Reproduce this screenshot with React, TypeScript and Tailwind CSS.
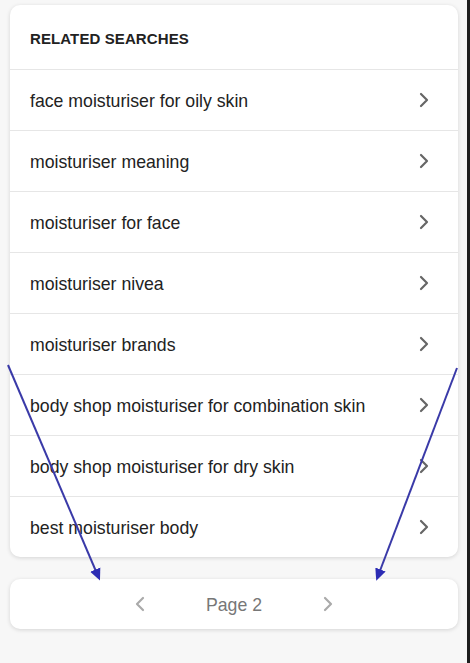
import React from 'react';

const searches = [
  'face moisturiser for oily skin',
  'moisturiser meaning',
  'moisturiser for face',
  'moisturiser nivea',
  'moisturiser brands',
  'body shop moisturiser for combination skin',
  'body shop moisturiser for dry skin',
  'best moisturiser body',
];

const Chevron = ({ dir = 'right', color = '#666' }: { dir?: 'left' | 'right'; color?: string }) => (
  <svg width="10" height="16" viewBox="0 0 10 16" fill="none">
    <polyline
      points={dir === 'right' ? '2,2 8,8 2,14' : '8,2 2,8 8,14'}
      stroke={color}
      strokeWidth="2.2"
      strokeLinecap="round"
      strokeLinejoin="round"
    />
  </svg>
);

const App = () => {
  return (
    <div
      className="relative flex w-[470px] h-[663px] bg-[#f7f7f7] overflow-hidden"
      style={{ fontFamily: '"Liberation Sans", Arial, sans-serif' }}
    >
      <div className="flex flex-col w-[467px] pl-[10px] pr-[9px] pt-[5px]">
        <div className="bg-white rounded-[10px] shadow-[0_1px_4px_rgba(0,0,0,0.14)]">
          <div className="h-[64px] flex items-center pl-[20px] pt-[4px]">
            <span className="text-[15px] font-bold text-[#222] tracking-[0.1px]">RELATED SEARCHES</span>
          </div>
          {searches.map((s) => (
            <div
              key={s}
              className="h-[61px] flex items-center justify-between border-t border-[#e6e6e6] pl-[20px] pr-[29px]"
            >
              <span className="text-[17.7px] text-[#222] pt-[3px]">{s}</span>
              <Chevron />
            </div>
          ))}
        </div>
        <div className="mt-[22px] h-[50px] bg-white rounded-[10px] shadow-[0_1px_4px_rgba(0,0,0,0.14)] flex items-center justify-center gap-[61px]">
          <Chevron dir="left" color="#aaa" />
          <span className="text-[17.7px] text-[#777] pt-[2px]">Page 2</span>
          <Chevron color="#aaa" />
        </div>
      </div>
      <div className="w-[3px] h-full bg-[#1e1e1e]" />

      <svg className="absolute inset-0 pointer-events-none" width="470" height="663" viewBox="0 0 470 663">
        <defs>
          <marker id="ah" markerWidth="12" markerHeight="12" refX="7" refY="6" orient="auto" markerUnits="userSpaceOnUse">
            <polygon points="0,0.5 12,6 0,11.5" fill="#2c2cb4" />
          </marker>
        </defs>
        <line x1="8" y1="365" x2="98" y2="576" stroke="#3a3aa8" strokeWidth="2" markerEnd="url(#ah)" />
        <line x1="457" y1="368" x2="378" y2="576" stroke="#3a3aa8" strokeWidth="2" markerEnd="url(#ah)" />
      </svg>
    </div>
  );
};

export default App;
